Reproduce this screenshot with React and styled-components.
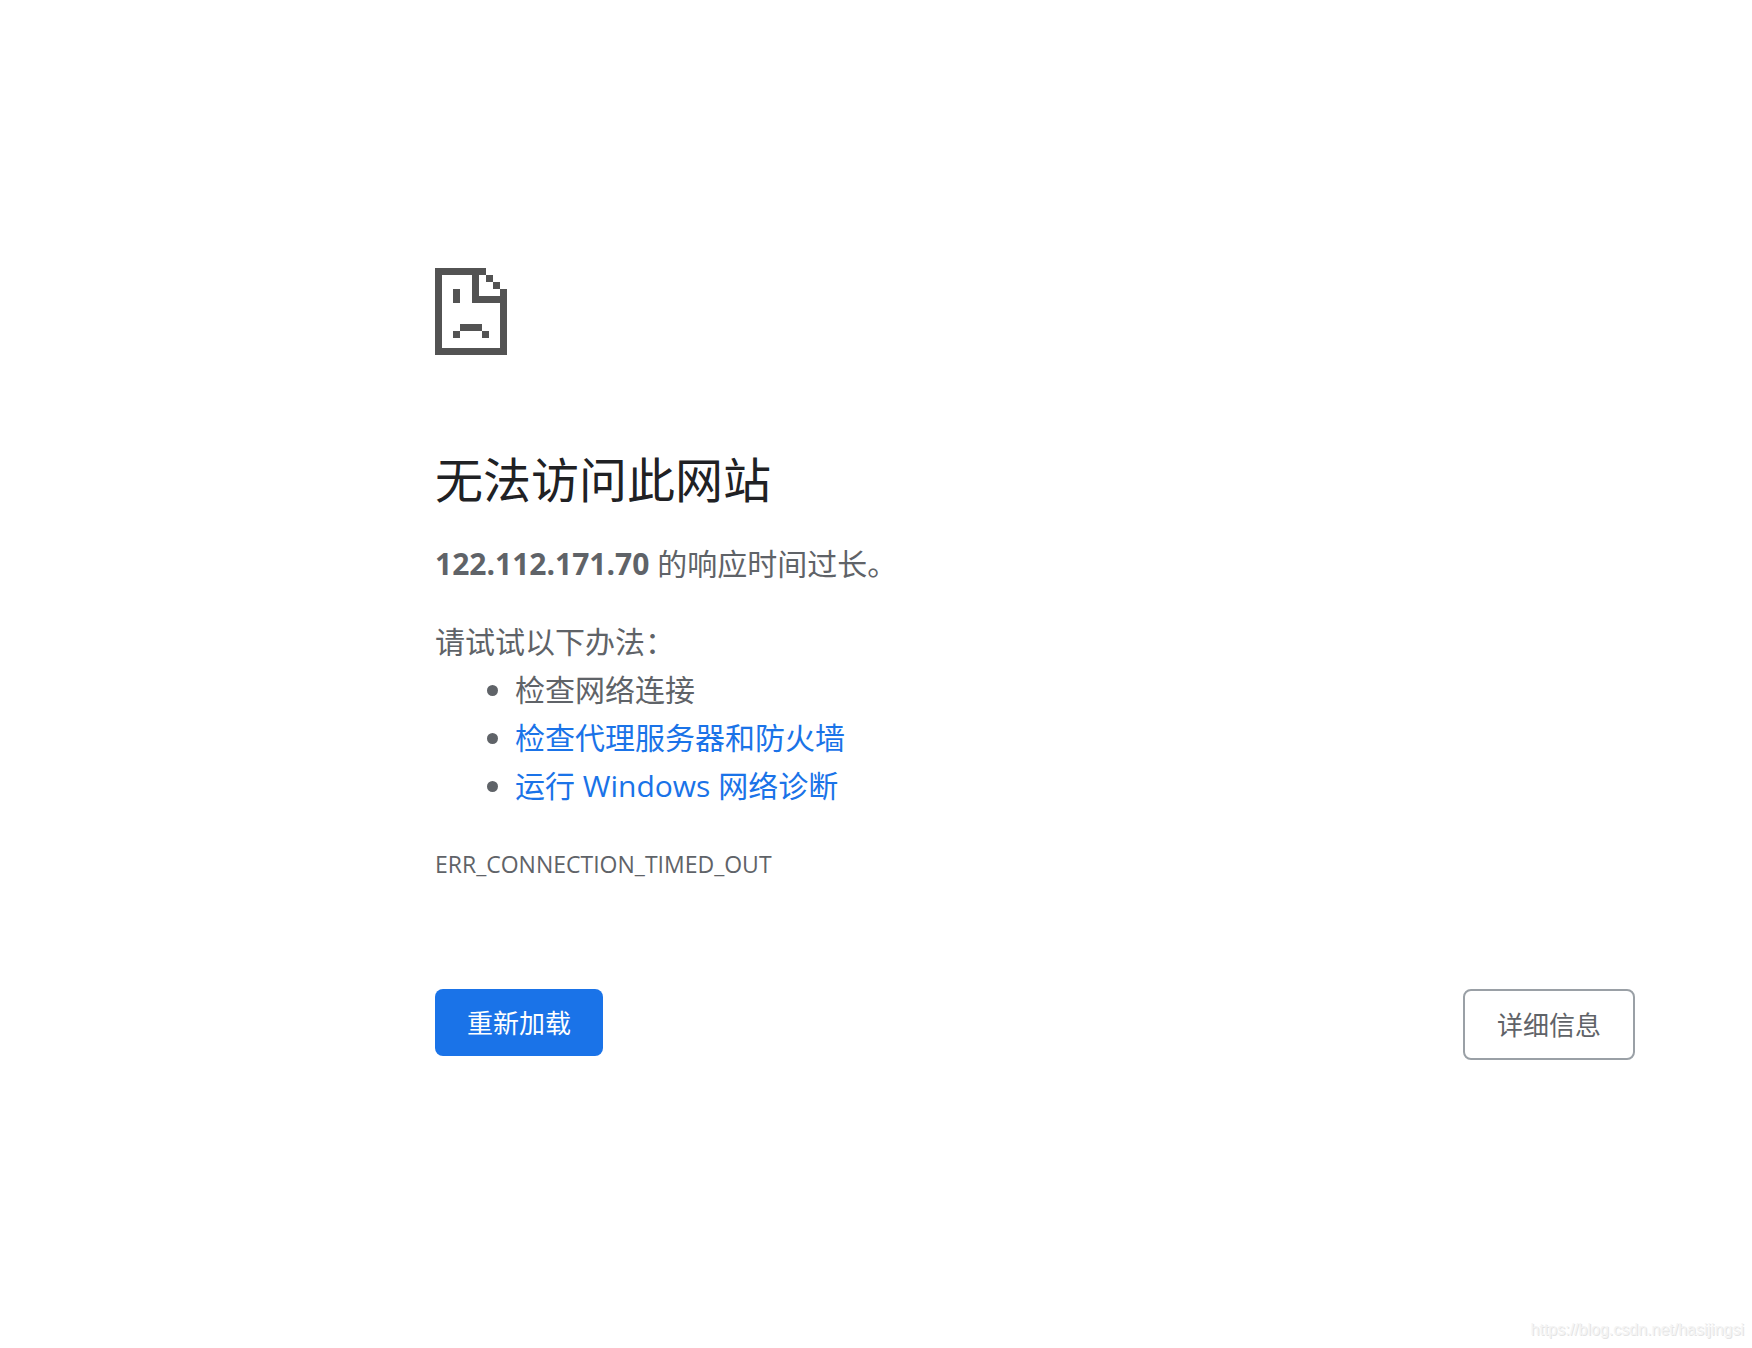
import React from 'react';
import styled, { createGlobalStyle } from 'styled-components';

const GlobalStyle = createGlobalStyle`
  body {
    margin: 0;
    background: #fff;
    color: #5f6368;
    font-family: "Open Sans", "Noto Sans CJK SC", sans-serif;
    font-size: 30px;
    line-height: 48px;
  }
`;

const Page = styled.div`
  box-sizing: border-box;
  display: flex;
  justify-content: flex-end;
  min-height: 100vh;
  padding: 268px 117px 80px;
`;

const Content = styled.main`
  flex: 1;
  max-width: 1200px;
`;

const SadFile = styled.svg`
  display: block;
  width: 72px;
  height: 87px;
  margin-bottom: 96px;
  fill: #535353;
`;

const Title = styled.h1`
  margin: 0 0 31px;
  color: #202124;
  font-size: 48px;
  font-weight: 400;
  line-height: 58px;
`;

const Paragraph = styled.p`
  margin: 0 0 30px;
`;

const Suggestions = styled.div`
  margin-bottom: 30px;

  p {
    margin: 0;
  }

  ul {
    margin: 0;
    padding-left: 80px;
  }
`;

const Link = styled.a`
  color: #1a73e8;
  text-decoration: none;
`;

const ErrorCode = styled.div`
  font-size: 23px;
`;

const Buttons = styled.div`
  display: flex;
  justify-content: space-between;
  align-items: flex-start;
  margin-top: 101px;
`;

const Button = styled.button`
  padding: 17px 32px 15px;
  border: ${props => props.$primary ? '0' : '2px solid #9aa0a6'};
  border-radius: 8px;
  background: ${props => props.$primary ? '#1a73e8' : '#fff'};
  color: ${props => props.$primary ? '#fff' : '#5f6368'};
  font-family: inherit;
  font-size: 26px;
  line-height: 35px;
  cursor: pointer;
`;

const Watermark = styled.div`
  position: absolute;
  right: 8px;
  bottom: 8px;
  color: #f4f4f4;
  font-family: "Liberation Sans", sans-serif;
  font-size: 16px;
  line-height: 20px;
  text-shadow: 1px 1px 0 #e4e4e4;
`;

function App() {
  return (
    <>
      <GlobalStyle />
      <Page>
        <Content>
          <SadFile viewBox="0 0 72 87" shapeRendering="crispEdges" aria-hidden="true">
            {/* page outline */}
            <path d="M0 0H51V7H44V28H65V21H72V87H0ZM7 7V80H65V35H37V7Z" fillRule="evenodd" />
            {/* folded corner */}
            <path d="M51 7h7v7h-7zM58 14h7v7h-7z" />
            {/* eye and mouth */}
            <path d="M18 21h7v14h-7zM25 56h22v7h-22zM18 63h7v7h-7zM47 63h7v7h-7z" />
          </SadFile>
          <Title>无法访问此网站</Title>
          <Paragraph><strong>122.112.171.70</strong> 的响应时间过长。</Paragraph>
          <Suggestions>
            <p>请试试以下办法：</p>
            <ul>
              <li>检查网络连接</li>
              <li><Link href="#proxy">检查代理服务器和防火墙</Link></li>
              <li><Link href="#diagnose">运行 Windows 网络诊断</Link></li>
            </ul>
          </Suggestions>
          <ErrorCode>ERR_CONNECTION_TIMED_OUT</ErrorCode>
          <Buttons>
            <Button type="button" $primary>重新加载</Button>
            <Button type="button">详细信息</Button>
          </Buttons>
        </Content>
      </Page>
      <Watermark>https://blog.csdn.net/hasijingsi</Watermark>
    </>
  );
}

export default App;
